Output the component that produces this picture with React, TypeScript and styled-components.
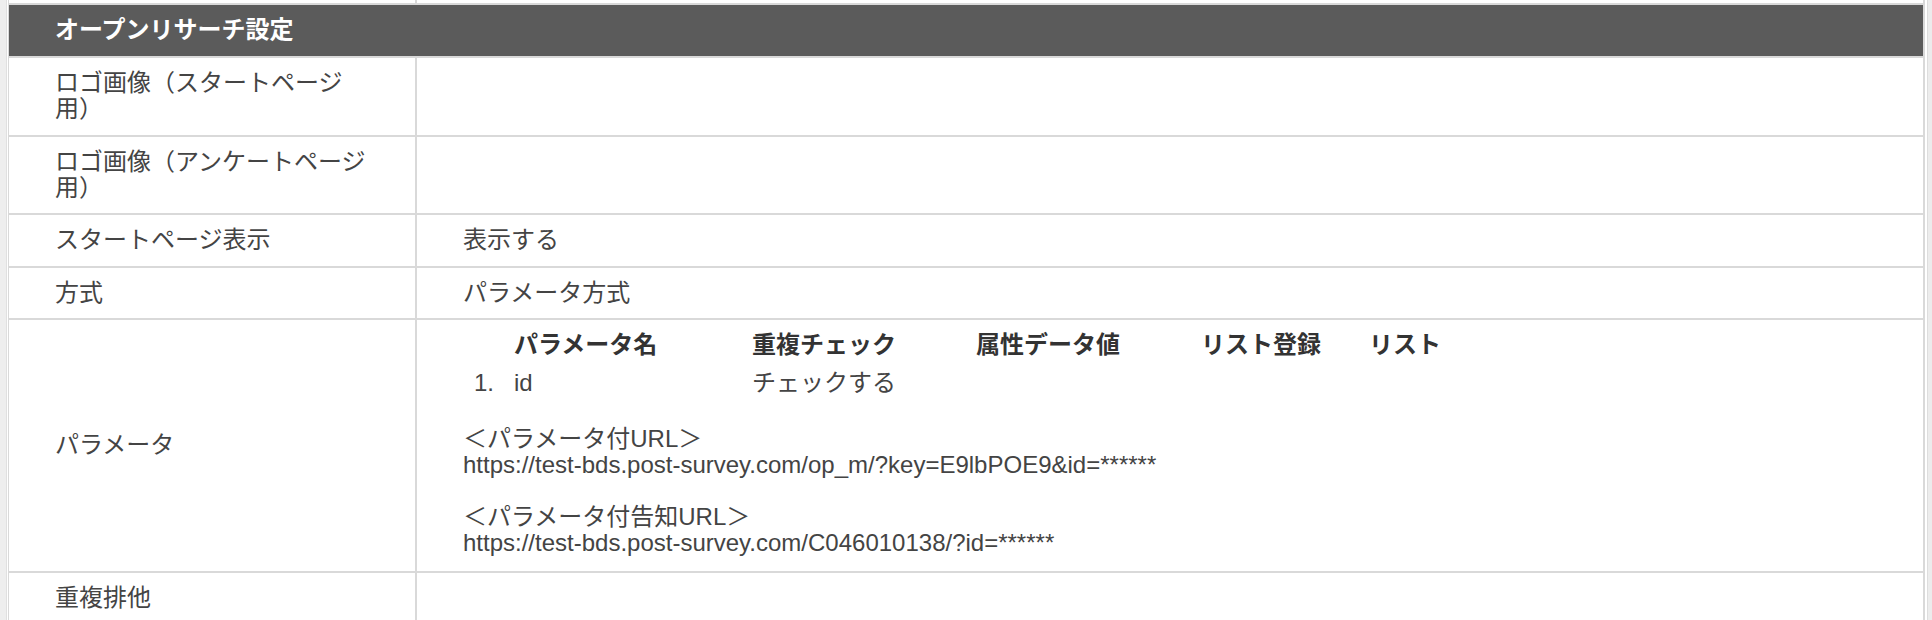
import React from "react";
import styled, { createGlobalStyle } from "styled-components";

const GlobalStyle = createGlobalStyle`
  html, body { margin: 0; padding: 0; background: #ffffff; }
  body {
    font-family: "Liberation Sans", Arial, "Noto Sans CJK JP", sans-serif;
    font-size: 24px;
    line-height: 26px;
    color: #444444;
  }
`;

const Page = styled.div`
  display: flex;
  width: 1932px;
  min-height: 620px;
  align-items: stretch;
`;

const LeftRail = styled.div`
  flex: none;
  width: 6px;
  background: #eeeeee;
  border-right: 1px solid #e0e0e0;
  margin-right: 1px;
`;

const RightRail = styled.div`
  flex: none;
  width: 4px;
  margin-left: 2px;
  background: #ececec;
  border-left: 1px solid #dddddd;
`;

const Table = styled.div`
  flex: 1;
  display: grid;
  grid-template-columns: 406px 1fr;
  grid-auto-rows: auto;
  gap: 2px;
  align-content: start;
  background: #d9d9d9;
  padding: 0 2px 0 1px;
`;

const StubCell = styled.div`
  height: 3px;
  background: #ffffff;
`;

const HeaderCell = styled.div`
  grid-column: 1 / -1;
  background: #5b5b5b;
  color: #ffffff;
  font-weight: bold;
  padding: 12px 46px 13px 46px;
`;

const LabelCell = styled.div<{ $tight?: boolean }>`
  background: #ffffff;
  display: flex;
  align-items: center;
  padding: 12px 40px ${(p) => (p.$tight ? "12px" : "13px")} 46px;
`;

const ValueCell = styled.div<{ $tight?: boolean }>`
  background: #ffffff;
  padding: 12px 46px ${(p) => (p.$tight ? "12px" : "13px")} 46px;
`;

const ParamBlock = styled.div`
  display: flex;
  flex-direction: column;
  padding-bottom: 2px;
`;

const ParamGrid = styled.div`
  display: grid;
  grid-template-columns: 40px 238px 224px 225px 168px auto;
  row-gap: 12px;
  margin-left: 11px;
`;

const HeadCell = styled.div`
  font-weight: bold;
  color: #333333;
  white-space: nowrap;
`;

const DataCell = styled.div`
  white-space: nowrap;
`;

const Notes = styled.div`
  display: flex;
  flex-direction: column;
  gap: 26px;
  margin-top: 30px;
`;

const Note = styled.div`
  display: flex;
  flex-direction: column;
`;

export default function App() {
  return (
    <>
      <GlobalStyle />
      <Page>
        <LeftRail />
        <Table>
          <StubCell />
          <StubCell />
          <HeaderCell>オープンリサーチ設定</HeaderCell>

          <LabelCell>ロゴ画像（スタートページ用）</LabelCell>
          <ValueCell />

          <LabelCell $tight>ロゴ画像（アンケートページ用）</LabelCell>
          <ValueCell $tight />

          <LabelCell>スタートページ表示</LabelCell>
          <ValueCell>表示する</ValueCell>

          <LabelCell $tight>方式</LabelCell>
          <ValueCell $tight>パラメータ方式</ValueCell>

          <LabelCell>パラメータ</LabelCell>
          <ValueCell>
            <ParamBlock>
              <ParamGrid>
                <div />
                <HeadCell>パラメータ名</HeadCell>
                <HeadCell>重複チェック</HeadCell>
                <HeadCell>属性データ値</HeadCell>
                <HeadCell>リスト登録</HeadCell>
                <HeadCell>リスト</HeadCell>
                <DataCell>1.</DataCell>
                <DataCell>id</DataCell>
                <DataCell>チェックする</DataCell>
                <DataCell />
                <DataCell />
                <DataCell />
              </ParamGrid>
              <Notes>
                <Note>
                  <span>＜パラメータ付URL＞</span>
                  <span>https://test-bds.post-survey.com/op_m/?key=E9lbPOE9&amp;id=******</span>
                </Note>
                <Note>
                  <span>＜パラメータ付告知URL＞</span>
                  <span>https://test-bds.post-survey.com/C046010138/?id=******</span>
                </Note>
              </Notes>
            </ParamBlock>
          </ValueCell>

          <LabelCell>重複排他</LabelCell>
          <ValueCell />
        </Table>
        <RightRail />
      </Page>
    </>
  );
}
